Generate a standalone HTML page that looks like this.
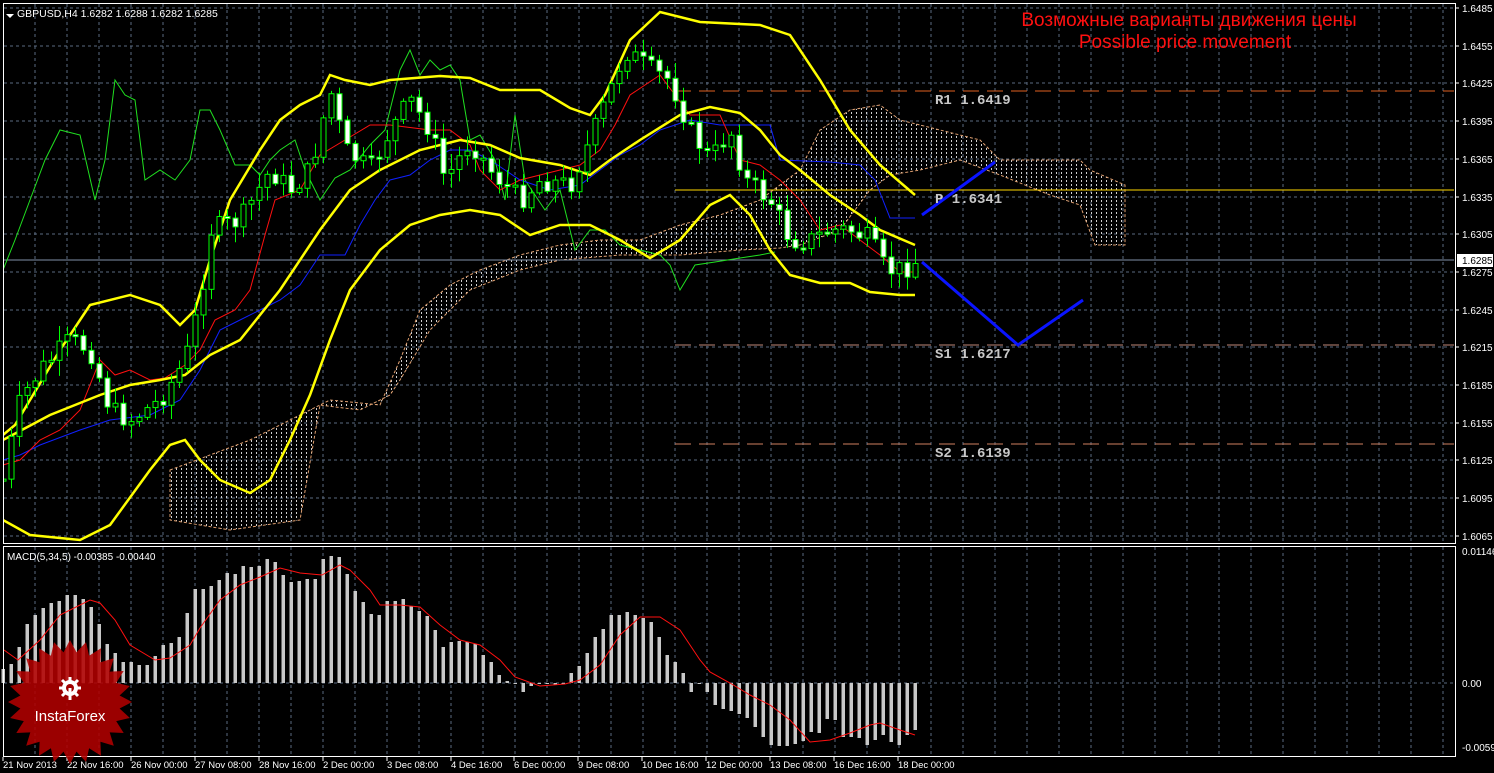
<!DOCTYPE html>
<html><head><meta charset="utf-8"><style>
html,body{margin:0;padding:0;background:#000;width:1494px;height:773px;overflow:hidden}
svg{display:block}
</style></head><body>
<svg id="s" width="1494" height="773" xmlns="http://www.w3.org/2000/svg" font-family="'Liberation Sans',sans-serif">
<defs>
<pattern id="hatch" width="5" height="4" patternUnits="userSpaceOnUse">
<line x1="1.5" y1="0" x2="1.5" y2="2" stroke="#cfcfcf" stroke-width="1"/>
</pattern>
<clipPath id="mainclip"><rect x="4" y="4" width="1450" height="538"/></clipPath>
</defs>
<rect width="1494" height="773" fill="#000"/>
<g id="grid"></g>
<g clip-path="url(#mainclip)">
<polygon id="cloud" fill="url(#hatch)" stroke="#e0a070" stroke-width="1" stroke-dasharray="3,2"/>
<line x1="4" y1="260" x2="1455" y2="260" stroke="#8090a8" stroke-width="1"/>
<line x1="675" y1="91" x2="1455" y2="91" stroke="#e06020" stroke-dasharray="16,8"/>
<line x1="675" y1="190" x2="1455" y2="190" stroke="#ffd700"/>
<line x1="675" y1="345" x2="1455" y2="345" stroke="#c08878" stroke-dasharray="16,8"/>
<line x1="675" y1="444" x2="1455" y2="444" stroke="#d08060" stroke-dasharray="16,8"/>
<g id="lines"></g>
<g id="candles"></g>
<polyline points="922,215 995,162" fill="none" stroke="#0a14ff" stroke-width="3"/>
<polyline points="922,262 1018,345 1083,300" fill="none" stroke="#0a14ff" stroke-width="3"/>
</g>
<g font-family="'Liberation Mono',monospace" font-weight="bold" font-size="14" fill="#c8c8c8">
<text x="935" y="104">R1 1.6419</text>
<text x="935" y="203">P 1.6341</text>
<text x="935" y="358">S1 1.6217</text>
<text x="935" y="457">S2 1.6139</text>
</g>
<text x="1189" y="26" fill="#ff1010" font-size="19" text-anchor="middle">Возможные варианты движения цены</text>
<text x="1185" y="48" fill="#ff1010" font-size="19" text-anchor="middle">Possible price movement</text>
<g id="macd"></g>
<rect x="3.5" y="3.5" width="1452" height="540" fill="none" stroke="#fff"/>
<rect x="3.5" y="546.5" width="1452" height="210" fill="none" stroke="#fff"/>
<polygon points="6,14 14,14 10,18" fill="#fff"/>
<text x="17" y="17" fill="#fff" font-size="10.5">GBPUSD,H4  1.6282 1.6288 1.6282 1.6285</text>
<text x="7" y="560" fill="#fff" font-size="10">MACD(5,34,5) -0.00385 -0.00440</text>
<g id="axis" fill="#fff" font-size="10"></g>
<rect x="1457" y="254" width="36" height="13" fill="#fff"/>
<text x="1462" y="264" fill="#000" font-size="10">1.6285</text>
<g transform="translate(70,702)">
<polygon id="star" fill="#b00000" fill-opacity="0.88"/>
<g fill="#fff">
<circle cx="0" cy="-14" r="8"/>
<g stroke="#fff" stroke-width="3"><line x1="0" y1="-25" x2="0" y2="-3"/><line x1="-11" y1="-14" x2="11" y2="-14"/><line x1="-8" y1="-22" x2="8" y2="-6"/><line x1="8" y1="-22" x2="-8" y2="-6"/></g>
<circle cx="0" cy="-14" r="4" fill="#a00000"/>
<rect x="-1.5" y="-14" width="3" height="12"/>
</g>
<text x="0" y="19" fill="#fff" font-size="15" text-anchor="middle">InstaForex</text>
</g>
</svg>
<script>
var NS="http://www.w3.org/2000/svg";
function el(p,t,a){var e=document.createElementNS(NS,t);for(var k in a)e.setAttribute(k,a[k]);p.appendChild(e);return e;}
var g=document.getElementById('grid');
for(var x=35;x<1455;x+=32){el(g,'line',{x1:x,y1:4,x2:x,y2:543,stroke:'#5a6a80','stroke-dasharray':'3,3'});el(g,'line',{x1:x,y1:547,x2:x,y2:756,stroke:'#5a6a80','stroke-dasharray':'3,3'});}
var prices=['1.6485','1.6455','1.6425','1.6395','1.6365','1.6335','1.6305','1.6275','1.6245','1.6215','1.6185','1.6155','1.6125','1.6095','1.6065'];
var ax=document.getElementById('axis');
for(var i=0;i<15;i++){var y=Math.round(8+i*37.7);el(g,'line',{x1:4,y1:y,x2:1455,y2:y,stroke:'#5a6a80','stroke-dasharray':'3,3'});
 var t=el(ax,'text',{x:1462,y:y+4});t.textContent=prices[i];
 el(ax,'line',{x1:1455,y1:y,x2:1459,y2:y,stroke:'#fff'});}
el(g,'line',{x1:4,y1:683,x2:1455,y2:683,stroke:'#5a6a80','stroke-dasharray':'3,3'});
[['0.01146',555],['0.00',687],['-0.00599',751]].forEach(function(a){var t=el(ax,'text',{x:1462,y:a[1]});t.textContent=a[0];});
var tl=[['21 Nov 2013',3],['22 Nov 16:00',67],['26 Nov 00:00',131],['27 Nov 08:00',195],['28 Nov 16:00',259],['2 Dec 00:00',323],['3 Dec 08:00',387],['4 Dec 16:00',451],['6 Dec 00:00',514],['9 Dec 08:00',578],['10 Dec 16:00',642],['12 Dec 00:00',706],['13 Dec 08:00',770],['16 Dec 16:00',834],['18 Dec 00:00',898]];
tl.forEach(function(a){var t=el(ax,'text',{x:a[1],y:768,'font-size':'9.5'});t.textContent=a[0];el(ax,'line',{x1:a[1],y1:757,x2:a[1],y2:761,stroke:'#fff'});});
function pts(a){return a.map(function(p){return p.join(',')}).join(' ');}
function interp(a,x){for(var i=0;i<a.length-1;i++){if(x<=a[i+1][0]){var t=(x-a[i][0])/(a[i+1][0]-a[i][0]);return a[i][1]+t*(a[i+1][1]-a[i][1]);}}return a[a.length-1][1];}
var up=[[170,470],[250,440],[330,400],[380,405],[400,360],[420,310],[450,285],[480,270],[520,255],[560,245],[600,240],[640,240],[680,225],[720,215],[760,200],[800,170],[820,130],[850,110],[880,105],[900,120],[940,130],[980,140],[1000,160],[1040,160],[1080,160],[1090,170],[1125,185]];
var lo=[[170,520],[230,530],[300,520],[320,405],[360,410],[390,395],[400,380],[430,330],[470,290],[520,270],[560,260],[620,255],[680,255],[740,250],[780,248],[800,245],[840,230],[870,190],[890,175],[920,170],[960,160],[1000,175],[1050,195],[1080,205],[1095,245],[1125,245]];
document.getElementById('cloud').setAttribute('points',pts(up.concat(lo.slice().reverse())));
var L=document.getElementById('lines');
var green=[[3,270],[15,240],[30,200],[45,160],[60,130],[80,135],[95,200],[105,160],[115,80],[125,95],[135,100],[145,180],[160,170],[175,180],[190,160],[200,110],[210,110],[220,130],[235,165],[250,165],[260,175],[270,160],[280,150],[295,140],[305,170],[320,200],[335,178],[350,170],[370,145],[385,130],[400,70],[410,50],[420,75],[430,60],[440,70],[450,65],[460,80],[470,140],[480,135],[495,160],[505,200],[515,115],[525,180],[545,210],[560,190],[575,250],[590,230],[605,230],[620,245],[640,250],[660,255],[670,265],[680,290],[695,265],[715,262],[740,258],[760,255],[775,252]];
var red=[[3,465],[20,460],[40,440],[60,430],[80,410],[100,360],[115,375],[130,370],[150,380],[165,378],[185,365],[200,350],[215,320],[235,310],[250,290],[265,235],[275,200],[300,190],[320,155],[345,140],[370,125],[390,125],[430,130],[450,130],[470,145],[480,170],[500,190],[520,180],[560,170],[580,165],[600,150],[615,125],[630,95],[660,75],[675,95],[690,115],[720,115],[740,160],[760,165],[780,180],[800,200],[820,230],[840,225],[860,240],[880,255],[900,272],[915,272]];
var blue=[[3,460],[20,455],[40,445],[80,430],[110,420],[150,415],[180,400],[200,370],[220,330],[240,320],[260,310],[280,300],[300,285],[320,255],[345,255],[360,225],[375,200],[390,180],[410,175],[430,160],[450,150],[470,150],[490,160],[520,180],[550,190],[580,185],[600,170],[620,155],[640,145],[660,130],[690,120],[720,125],[770,125],[780,160],[830,162],[860,165],[875,180],[890,218],[915,218]];
var bbu=[[3,435],[15,425],[30,400],[60,350],[90,305],[130,295],[160,305],[180,325],[195,310],[210,260],[230,200],[260,150],[280,120],[300,105],[320,95],[330,75],[345,80],[370,85],[390,80],[440,76],[470,78],[500,90],[540,90],[570,108],[590,115],[605,95],[630,40],[660,12],[700,22],[760,25],[790,35],[820,80],[850,130],[880,165],[915,195]];
var bbm=[[3,440],[50,415],[100,395],[130,385],[160,380],[185,375],[210,355],[240,340],[280,290],[320,230],[350,190],[380,170],[420,150],[460,140],[490,145],[520,158],[560,165],[590,175],[610,160],[640,140],[680,115],[710,107],[740,113],[760,130],[780,155],[800,170],[830,195],[860,215],[880,230],[915,245]];
var bbl=[[3,520],[30,535],[80,540],[110,525],[150,470],[170,445],[185,440],[200,460],[220,480],[250,493],[270,480],[290,440],[310,395],[330,340],[350,290],[380,250],[410,225],[440,215],[470,210],[500,215],[530,235],[560,225],[590,225],[620,240],[650,258],[680,240],[710,205],[730,195],[750,215],[770,250],[790,275],[820,283],[850,283],[870,292],[900,295],[915,295]];
el(L,'polyline',{points:pts(green),fill:'none',stroke:'#20e020','stroke-width':1});
el(L,'polyline',{points:pts(blue),fill:'none',stroke:'#1020ff','stroke-width':1});
el(L,'polyline',{points:pts(red),fill:'none',stroke:'#ff1010','stroke-width':1});
[bbu,bbm,bbl].forEach(function(b){el(L,'polyline',{points:pts(b),fill:'none',stroke:'#ffff00','stroke-width':2.5});});
var close=[[5,470],[20,400],[40,370],[70,340],[90,350],[110,410],[130,420],[160,400],[185,360],[200,300],[210,230],[240,220],[270,170],[290,190],[310,170],[330,90],[345,150],[370,170],[390,130],[410,100],[430,130],[445,180],[470,140],[490,170],[520,200],[540,180],[570,185],[590,140],[610,90],[625,50],[650,70],[670,80],[690,130],[710,160],[730,130],[745,180],[770,200],[790,240],[810,240],[830,230],[850,230],[870,240],[885,270],[900,270],[915,262]];
var seed=7;function rnd(){seed=(seed*9301+49297)%233280;return seed/233280;}
var C=document.getElementById('candles');var prev=interp(close,3);
for(var i=0;i<115;i++){var x=3+8*i;var c=interp(close,x)+(rnd()-0.5)*22;var o=prev;var hi=Math.min(o,c)-rnd()*14-2,lw=Math.max(o,c)+rnd()*14+2;
 el(C,'line',{x1:x+0.5,y1:hi,x2:x+0.5,y2:lw,stroke:'#00ff00'});
 var t=Math.min(o,c),h=Math.max(Math.abs(o-c),2);
 el(C,'rect',{x:x-2,y:t,width:5,height:h,fill:(c<o?'#000':'#fff'),stroke:'#00ff00','stroke-width':1});
 prev=c;}
var M=document.getElementById('macd');
var hv=[669,664,647,624,615,608,603,601,595,595,599,607,624,644,653,662,662,665,665,656,645,643,637,613,589,589,586,580,573,574,566,567,566,559,562,575,582,581,579,579,559,556,557,574,591,602,614,615,601,601,599,606,611,616,630,647,642,641,642,644,655,662,675,681,683,692,686,684,684,685,684,673,666,653,637,629,615,615,612,615,618,622,637,655,662,673,692,684,692,705,709,711,714,718,727,737,745,746,746,744,741,732,733,719,720,737,737,738,745,740,735,742,745,735,730];
for(var i=0;i<hv.length;i++){var x=3+8*i;var y=hv[i];var t=Math.min(y,683),h=Math.max(Math.abs(683-y),1);el(M,'rect',{x:x-1.5,y:t,width:3.5,height:h,fill:'#c8c8c8'});}
var sig=[[4,650],[18,660],[40,640],[60,615],[90,600],[100,603],[115,620],[130,645],[155,660],[170,658],[190,645],[200,628],[220,600],[240,585],[260,577],[280,568],[300,573],[322,575],[340,565],[350,570],[370,590],[380,605],[400,605],[420,607],[440,625],[460,640],[480,645],[500,660],[515,677],[540,686],[565,684],[580,680],[600,665],[620,635],[640,617],[660,617],[680,630],[700,660],[710,672],[730,683],[750,695],[770,705],[790,720],[810,742],[830,740],[850,733],[870,725],[880,723],[900,730],[915,735]];
el(M,'polyline',{points:pts(sig),fill:'none',stroke:'#ff1010','stroke-width':1});
var sp=[];for(var k=0;k<48;k++){var a=k*Math.PI/24-Math.PI/2;var r=k%2?50:62;sp.push([(r*Math.cos(a)).toFixed(1),(r*Math.sin(a)).toFixed(1)]);}
document.getElementById('star').setAttribute('points',pts(sp));
</script>
</body></html>
